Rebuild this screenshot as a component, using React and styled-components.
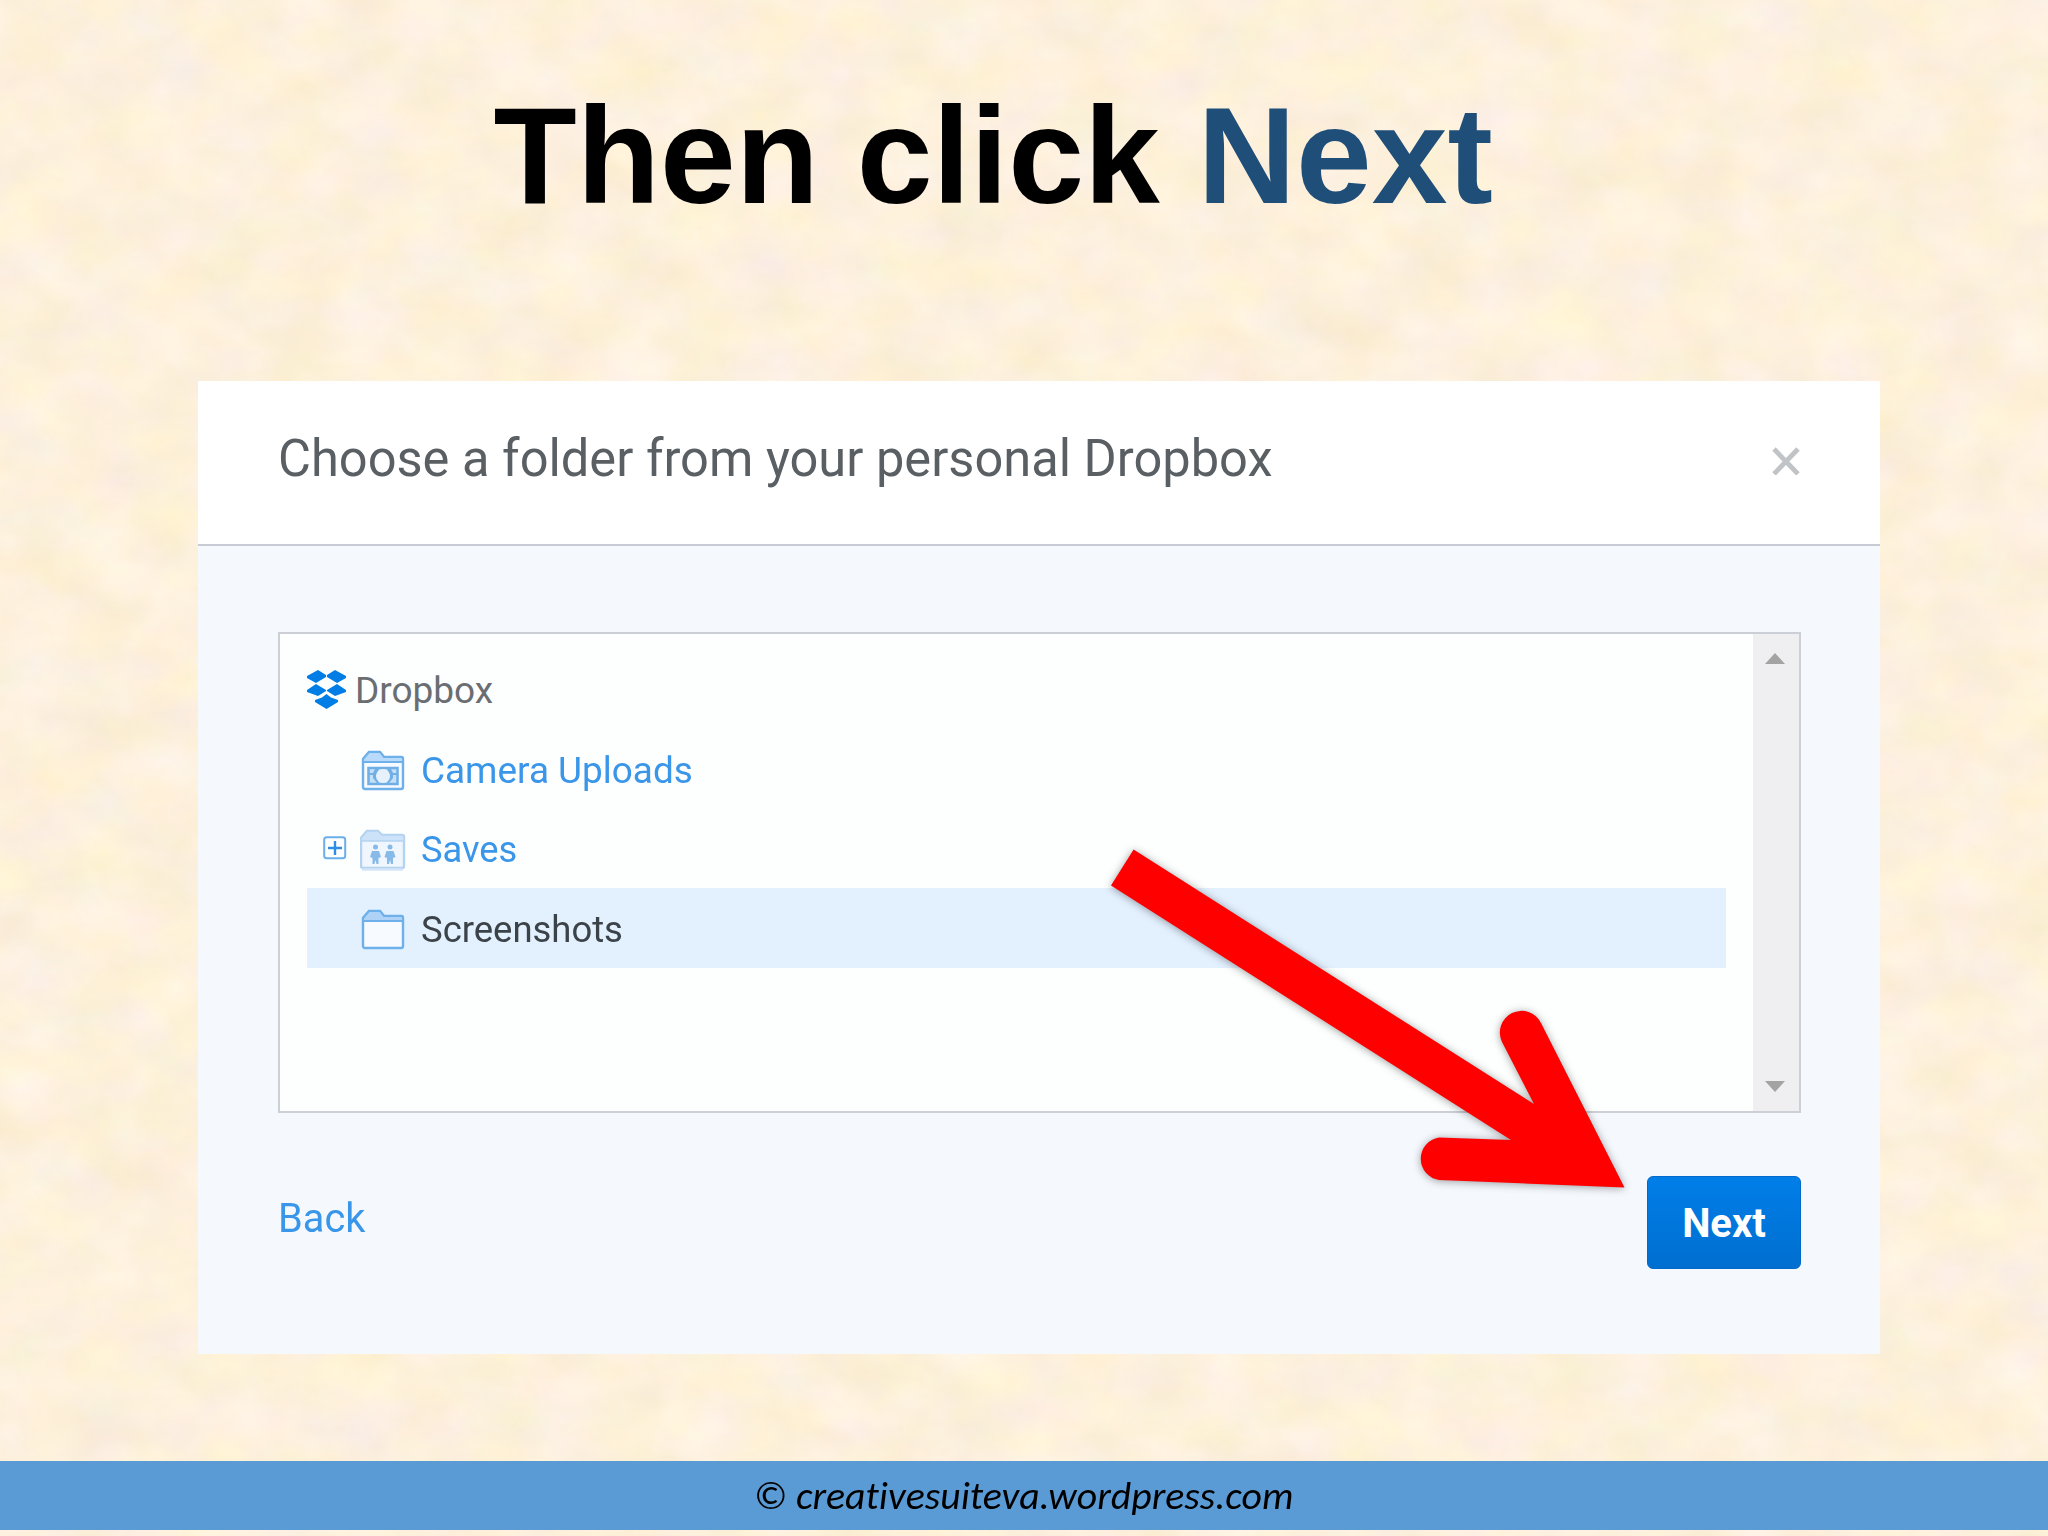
import React, { Component } from 'react'
import styled, { createGlobalStyle, css } from 'styled-components'

const GlobalStyle = createGlobalStyle`
  body {
    margin: 0;
    background: #fdf0db;
  }
`

const Slide = styled.div`
  position: relative;
  display: flex;
  flex-direction: column;
  width: 2048px;
  height: 1536px;
  overflow: hidden;
  background: #fdf0db;
  font-family: Roboto, "Liberation Sans", sans-serif;
`

const Paper = styled.svg`
  position: absolute;
  top: 0;
  left: 0;
  width: 100%;
  height: 100%;
`

/* keeps the glyph height and narrows or widens the line */
const stretch = css`
  display: inline-block;
  white-space: pre;
  transform: scaleX(${props => props.$stretch || 1});
  transform-origin: ${props => props.$origin || 'left'} center;
`

const Heading = styled.h1`
  position: relative;
  display: flex;
  justify-content: center;
  height: 381px;
  box-sizing: border-box;
  margin: 0;
  padding-right: 62px;
  font-family: "Liberation Sans", Arial, sans-serif;
  font-size: 138px;
  font-weight: bold;
  line-height: 311px;
  color: #000;
`

const HeadingText = styled.span`
  ${stretch}
`

const Accent = styled.span`
  color: #1f4e79;
`

const Dialog = styled.section`
  position: relative;
  display: flex;
  flex-direction: column;
  width: 1682px;
  height: 973px;
  margin-left: 198px;
  background: #f5f8fd;
`

const DialogHeader = styled.header`
  display: flex;
  align-items: center;
  justify-content: space-between;
  height: 165px;
  box-sizing: border-box;
  padding: 0 79px 6px 80px;
  background: #fff;
  border-bottom: 2px solid #c8cbd3;
`

const DialogTitle = styled.h2`
  margin: 0;
  padding-bottom: 2px;
  font-size: 52px;
  font-weight: 400;
  line-height: 60px;
  color: #5a5f64;
  ${stretch}
`

const DialogBody = styled.div`
  flex: 1;
  display: flex;
  flex-direction: column;
  padding: 86px 79px 0 80px;
`

const FolderBox = styled.div`
  display: flex;
  height: 481px;
  box-sizing: border-box;
  background: #fdfefe;
  border: 2px solid #cdcfd7;
`

const FolderList = styled.ul`
  flex: 1;
  margin: 0;
  padding: 16px 27px 0 27px;
  list-style: none;
`

const Row = styled.li`
  display: flex;
  align-items: center;
  height: 79.4px;
  box-sizing: border-box;
  padding: ${props => (props.$root ? '2px 0 0' : '4px 0 0 16px')};
  background: ${props => (props.$selected ? '#e3f0fe' : 'transparent')};
`

const Toggle = styled.span`
  display: flex;
  width: 24px;
  margin-right: 13px;
  padding-bottom: 5px;
`

const IconSlot = styled.span`
  display: flex;
  width: 46px;
  margin-right: 15px;
`

const RootIcon = styled.span`
  display: flex;
  width: 39px;
  margin-right: 9px;
  padding-bottom: 2px;
`

const Name = styled.span`
  font-size: 37px;
  line-height: 60px;
  color: ${props => props.$color};
  ${stretch}
`

const Scrollbar = styled.div`
  display: flex;
  flex-direction: column;
  justify-content: space-between;
  align-items: center;
  width: 46px;
  box-sizing: border-box;
  padding: 19px 2px 19px 0;
  background: #efeff2;
`

const DialogFooter = styled.footer`
  display: flex;
  justify-content: space-between;
  align-items: flex-start;
  padding-top: 63px;
`

const BackLink = styled.a`
  margin-top: 12px;
  font-size: 41px;
  line-height: 60px;
  color: #3a96e8;
  ${stretch}
`

const NextButton = styled.button`
  width: 154px;
  height: 93px;
  padding: 2px 0 0;
  border: 1px solid #0069cb;
  border-radius: 6px;
  background: linear-gradient(to bottom, #007ee8 0%, #006fd0 100%);
  font-family: inherit;
  font-size: 40px;
  font-weight: bold;
  color: #fff;
`

const ButtonText = styled.span`
  ${stretch}
`

const Credit = styled.div`
  position: relative;
  display: flex;
  justify-content: center;
  height: 69px;
  margin-top: 107px;
  background: #5b9bd5;
  font-family: Carlito, Lato, "Open Sans", sans-serif;
  font-size: 39px;
  font-style: italic;
  font-variant-ligatures: none;
  line-height: 70px;
  color: #000;
`

const CreditText = styled.span`
  ${stretch}
`

const Pointer = styled.svg`
  position: absolute;
  top: 830px;
  left: 1090px;
  filter: drop-shadow(0 1px 4px rgba(0, 0, 0, 0.38));
`

const CloseIcon = () => (
  <svg width="29" height="31" viewBox="0 -1 29 31">
    <path d="M2 4L26 29M26 4L2 29" stroke="#c1c4c7" strokeWidth="4.800" />
  </svg>
)

const DropboxIcon = () => (
  <svg width="39" height="39" viewBox="0 0 39 39" fill="#007ee5">
    <path d="M11 0L19 5V7L9 13L0 8V6ZM28 0L39 6V8L30 13L20 7V5ZM0 20L9 14L19 20V21L11 26L0 22ZM30 14L39 20V22L28 26L20 21V20ZM19.500 24L24 27.500L31 30V32L19.500 39L8 32V30L15 27.500Z" />
  </svg>
)

const FolderShape = ({ stroke, tab }) => (
  <>
    <path d="M3 37V9L9 2H20L24 7H41Q43 7 43 9V37Q43 39 41 39H5Q3 39 3 37Z" fill="#f7fbff" stroke={stroke} strokeWidth="2.400" />
    <path d="M3 12V9L9 2H20L24 7H41Q43 7 43 9V12Z" fill={tab} stroke={stroke} strokeWidth="2" />
  </>
)

const FolderIcon = () => (
  <svg width="46" height="42" viewBox="0 0 46 42">
    <FolderShape stroke="#6eb0ea" tab="#aed3f7" />
  </svg>
)

const CameraFolderIcon = () => (
  <svg width="46" height="42" viewBox="0 0 46 42">
    <FolderShape stroke="#6eb0ea" tab="#b9dafa" />
    <rect x="8.500" y="18" width="29" height="16" fill="#c4dff8" stroke="#6fafe6" strokeWidth="2.500" />
    <path d="M8 24H14M38 24H32" fill="none" stroke="#6fafe6" strokeWidth="2" />
    <path d="M15 19H19L16 26L19 33H17L13 28V23ZM31 19H27L30 26L27 33H29L33 28V23Z" fill="#6fafe6" />
    <circle cx="23" cy="26" r="7" fill="#e6f1fb" />
  </svg>
)

const SharedFolderIcon = () => (
  <svg width="46" height="42" viewBox="-1 0 46 42">
    <path d="M0 37V9L6 2H17L21 6H41Q43 6 43 8V37Q43 39 41 39H2Q0 39 0 37Z" fill="#eff6fd" stroke="#b4d3ef" strokeWidth="2.400" />
    <path d="M0 12V9L6 2H17L21 6H41Q43 6 43 8V12Z" fill="#cbe2f8" stroke="#b4d3ef" strokeWidth="1.500" />
    <path d="M1 40.500H42" stroke="#d3e5f6" strokeWidth="2.500" />
    <g fill="#88bae8">
      <circle cx="14.500" cy="18" r="2.500" />
      <circle cx="29" cy="18" r="2.500" />
      <path d="M11 22H18L20 28L17.500 29V35H15.500L14.500 31L13.500 35H11.500V29L9 28ZM25.500 22H32.500L34.500 28L32 29V35H30L29 31L28 35H26V29L23.500 28Z" />
    </g>
  </svg>
)

const PlusIcon = () => (
  <svg width="24" height="24" viewBox="0 0 24 24">
    <rect x="1.200" y="1.200" width="21" height="21" rx="2.500" fill="#fff" stroke="#6aaeea" strokeWidth="2" />
    <path d="M5 12H19M12 5V19" stroke="#2d8ce3" strokeWidth="2.400" />
  </svg>
)

const ScrollArrow = ({ down }) => (
  <svg width="20" height="11" viewBox="0 0 20 11">
    <path d={down ? 'M0 0H20L10 11Z' : 'M0 11H20L10 0Z'} fill="#a3a3a4" />
  </svg>
)

const folders = [
  { name: 'Camera Uploads', icon: <CameraFolderIcon />, color: '#3a96e8', stretch: 0.998 },
  { name: 'Saves', icon: <SharedFolderIcon />, color: '#3a96e8', stretch: 0.98, expandable: true },
  { name: 'Screenshots', icon: <FolderIcon />, color: '#3b4248', stretch: 0.985, selected: true },
]

class App extends Component {
  render() {
    return <Slide>
      <GlobalStyle />
      <Paper>
        <filter id="paper" x="0" y="0" width="100%" height="100%" colorInterpolationFilters="sRGB">
          <feTurbulence type="fractalNoise" baseFrequency="0.015 0.02" numOctaves="4" seed="21" />
          <feColorMatrix values="0.05 0 0 0 0.967  0.04 0.04 0 0 0.903  0.03 0.03 0.12 0 0.772  0 0 0 0 1" />
        </filter>
        <rect width="2048" height="1536" filter="url(#paper)" />
      </Paper>
      <Heading>
        <HeadingText $stretch={0.987} $origin="center">
          Then click <Accent>Next</Accent>
        </HeadingText>
      </Heading>
      <Dialog>
        <DialogHeader>
          <DialogTitle $stretch={0.973}>Choose a folder from your personal Dropbox</DialogTitle>
          <CloseIcon />
        </DialogHeader>
        <DialogBody>
          <FolderBox>
            <FolderList>
              <Row $root>
                <RootIcon><DropboxIcon /></RootIcon>
                <Name $color="#6a6e72" $stretch={1}>Dropbox</Name>
              </Row>
              {folders.map(folder => (
                <Row key={folder.name} $selected={folder.selected}>
                  <Toggle>{folder.expandable && <PlusIcon />}</Toggle>
                  <IconSlot>{folder.icon}</IconSlot>
                  <Name $color={folder.color} $stretch={folder.stretch}>{folder.name}</Name>
                </Row>
              ))}
            </FolderList>
            <Scrollbar>
              <ScrollArrow />
              <ScrollArrow down />
            </Scrollbar>
          </FolderBox>
          <DialogFooter>
            <BackLink $stretch={0.97}>Back</BackLink>
            <NextButton><ButtonText $stretch={1} $origin="center">Next</ButtonText></NextButton>
          </DialogFooter>
        </DialogBody>
      </Dialog>
      <Credit>
        <CreditText $stretch={1.02} $origin="center">© creativesuiteva.wordpress.com</CreditText>
      </Credit>
      <Pointer width="550" height="380" viewBox="1090 830 550 380">
        <path
          d="M1133.600 849.500L1534 1104L1502 1042A21 21 0 0 1 1541 1023L1624.500 1187.500L1439 1180A21.500 21.500 0 0 1 1439 1137.500L1511 1140L1111 885.500Z"
          fill="#fe0000"
        />
      </Pointer>
    </Slide>
  }
}

export default App
